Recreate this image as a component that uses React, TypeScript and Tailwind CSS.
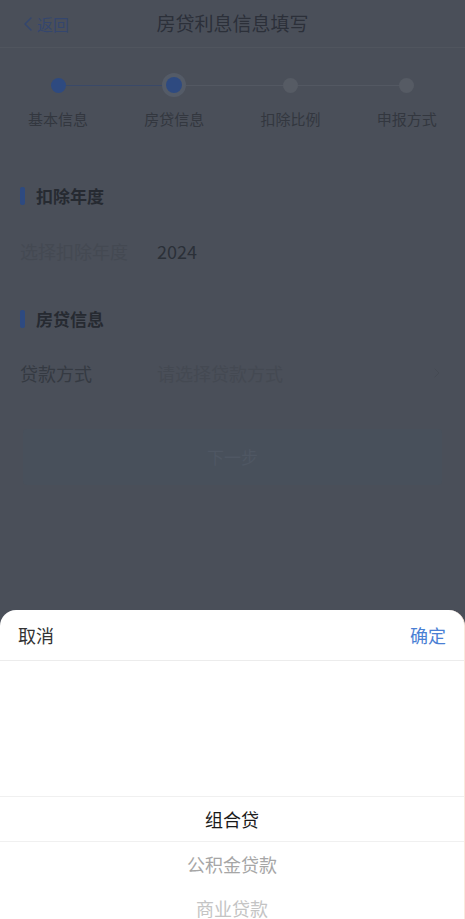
import { ChevronLeft, ChevronRight } from 'lucide-react';

export default function App() {
  const steps = [
    { label: '基本信息', state: 'done' },
    { label: '房贷信息', state: 'current' },
    { label: '扣除比例', state: 'todo' },
    { label: '申报方式', state: 'todo' },
  ];

  const options = ['组合贷', '公积金贷款', '商业贷款'];

  return (
    <div className="relative h-[919px] w-full overflow-hidden bg-[#4a4f59] font-['Noto_Sans_CJK_SC','Noto_Sans',sans-serif]">
      {/* Header */}
      <div className="grid h-[48px] grid-cols-[90px_1fr_90px] items-center border-b border-[#50555e]">
        <div className="flex items-center pl-[16px] text-[16px] text-[#34466e]">
          <ChevronLeft size={24} strokeWidth={1.5} className="-mr-[3px]" />
          <span>返回</span>
        </div>
        <h1 className="text-center text-[19px] text-[#2c3039]">房贷利息信息填写</h1>
        <div />
      </div>

      {/* Steps */}
      <div className="mt-[25px] grid grid-cols-4">
        {steps.map((step, i) => {
          const leftColor = i === 0 ? 'bg-transparent' : i === 1 ? 'bg-[#3a4968] h-[2px]' : 'bg-[#535862] h-px';
          const rightColor = i === 3 ? 'bg-transparent' : i === 0 ? 'bg-[#3a4968] h-[2px]' : 'bg-[#535862] h-px';
          return (
            <div key={step.label} className="flex flex-col items-center">
              <div className="flex h-[24px] w-full items-center">
                <div className={`h-px flex-1 ${leftColor}`} />
                {step.state === 'current' ? (
                  <div className="flex h-[24px] w-[24px] items-center justify-center rounded-full bg-[#545b67]">
                    <div className="h-[16px] w-[16px] rounded-full bg-[#2e4a80]" />
                  </div>
                ) : (
                  <div
                    className={`h-[15px] w-[15px] rounded-full ${
                      step.state === 'done' ? 'bg-[#2e4a80]' : 'bg-[#565b64]'
                    }`}
                  />
                )}
                <div className={`h-px flex-1 ${rightColor}`} />
              </div>
              <div className="mt-[11px] text-[15px] leading-[22px] text-[#33373f]">{step.label}</div>
            </div>
          );
        })}
      </div>

      {/* 扣除年度 */}
      <div className="mt-[44px] flex h-[44px] items-center gap-[11px] px-[20px]">
        <div className="h-[18px] w-[5px] rounded-[2px] bg-[#2e4a80]" />
        <span className="text-[17px] font-bold text-[#262a31]">扣除年度</span>
      </div>
      <div className="flex h-[66px] items-center px-[20px] text-[18px]">
        <span className="w-[137px] text-[#444952]">选择扣除年度</span>
        <span className="text-[#2b3038]">2024</span>
      </div>

      {/* 房贷信息 */}
      <div className="mt-[13px] flex h-[44px] items-center gap-[11px] px-[20px]">
        <div className="h-[18px] w-[5px] rounded-[2px] bg-[#2e4a80]" />
        <span className="text-[17px] font-bold text-[#262a31]">房贷信息</span>
      </div>
      <div className="flex h-[64px] items-center px-[20px] text-[18px]">
        <span className="w-[137px] text-[#353a42]">贷款方式</span>
        <span className="flex-1 text-[#444952]">请选择贷款方式</span>
        <ChevronRight size={16} strokeWidth={1.5} className="text-[#454a53]" />
      </div>

      {/* Next button (disabled) */}
      <div className="mx-[23px] mt-[24px] flex h-[56px] items-center justify-center rounded-[4px] bg-[#48505b] text-[17px] text-[#4f5763]">
        下一步
      </div>

      {/* Bottom sheet picker */}
      <div className="absolute inset-x-0 top-[610px] bottom-0 overflow-hidden rounded-t-[16px] border-r border-[#fbe8dc] bg-white">
        <div className="flex h-[51px] items-center justify-between border-b border-[#ececec] px-[18px] text-[18px]">
          <span className="text-[#333333]">取消</span>
          <span className="text-[#4a7fd4]">确定</span>
        </div>
        <div className="pt-[135px]">
          {options.map((opt, i) => (
            <div
              key={opt}
              className={`flex h-[44px] items-center justify-center text-[18px] ${
                i === 0
                  ? 'box-content border-y border-[#f0f0f0] text-[#1a1a1a]'
                  : i === 1
                    ? 'text-[#a6a6a6]'
                    : 'text-[#c4c4c4]'
              }`}
            >
              {opt}
            </div>
          ))}
        </div>
      </div>
    </div>
  );
}
